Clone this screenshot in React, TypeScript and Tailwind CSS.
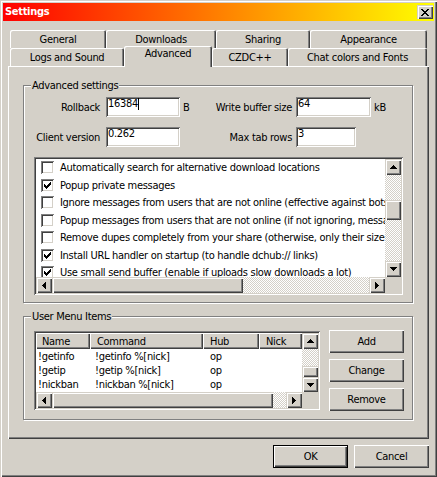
import React from 'react';

// classic 3d edges
const RAISED_BTN =
  'shadow-[inset_1px_1px_0_#ffffff,inset_-1px_-1px_0_#404040,inset_-2px_-2px_0_#808080]';
const RAISED_BAR =
  'shadow-[inset_1px_1px_0_#d4d0c8,inset_2px_2px_0_#ffffff,inset_-1px_-1px_0_#404040,inset_-2px_-2px_0_#808080]';
const SUNKEN =
  'shadow-[inset_1px_1px_0_#808080,inset_-1px_-1px_0_#ffffff,inset_2px_2px_0_#404040,inset_-2px_-2px_0_#d4d0c8]';
const DITHER =
  'bg-[image:repeating-conic-gradient(#ffffff_0_25%,#d4d0c8_0_50%)] bg-[length:2px_2px]';

function Arrow({ dir }: { dir: 'up' | 'down' | 'left' | 'right' }) {
  const sizes = [1, 3, 5, 7];
  if (dir === 'up' || dir === 'down') {
    return (
      <svg width="7" height="4" viewBox="0 0 7 4" shapeRendering="crispEdges">
        {sizes.map((w, i) => (
          <rect key={i} x={(7 - w) / 2} y={dir === 'up' ? i : 3 - i} width={w} height="1" fill="#000" />
        ))}
      </svg>
    );
  }
  return (
    <svg width="4" height="7" viewBox="0 0 4 7" shapeRendering="crispEdges">
      {sizes.map((h, i) => (
        <rect key={i} x={dir === 'left' ? i : 3 - i} y={(7 - h) / 2} width="1" height={h} fill="#000" />
      ))}
    </svg>
  );
}

function ScrollBtn({ dir, className = 'h-[16px]' }: { dir: 'up' | 'down' | 'left' | 'right'; className?: string }) {
  return (
    <div className={`flex w-[16px] shrink-0 items-center justify-center bg-[#d4d0c8] ${RAISED_BAR} ${className}`}>
      <Arrow dir={dir} />
    </div>
  );
}

function Thumb({ className }: { className: string }) {
  return <div className={`shrink-0 bg-[#d4d0c8] ${RAISED_BAR} ${className}`} />;
}

function Check({ on }: { on: boolean }) {
  const cols = [
    [3, 5],
    [4, 6],
    [5, 7],
    [6, 6],
    [7, 5],
    [8, 4],
    [9, 3],
  ];
  return (
    <div className={`relative h-[13px] w-[13px] shrink-0 bg-white ${SUNKEN}`}>
      {on && (
        <svg className="absolute left-0 top-0" width="13" height="13" viewBox="0 0 13 13" shapeRendering="crispEdges">
          {cols.map(([x, y]) => (
            <rect key={x} x={x} y={y} width="1" height="3" fill="#000" />
          ))}
        </svg>
      )}
    </div>
  );
}

function Button({ label, def }: { label: string; def?: boolean }) {
  return (
    <div
      className={`flex h-[23px] w-[75px] items-center justify-center bg-[#d4d0c8] ${
        def ? 'border border-black' : ''
      } ${RAISED_BTN}`}
    >
      {label}
    </div>
  );
}

function Field({ value, caret, className }: { value: string; caret?: boolean; className: string }) {
  return (
    <div className={`flex h-[20px] shrink-0 items-start bg-white pl-[2px] pt-0 ${SUNKEN} ${className}`}>
      <span>{value}</span>
      {caret && <span className="mt-[1px] h-[12px] w-px bg-black" />}
    </div>
  );
}

function Tab({ label, className }: { label: string; className: string }) {
  return (
    <div
      className={`flex shrink-0 items-center justify-center rounded-t-[2px] bg-[#d4d0c8] pt-px shadow-[inset_1px_1px_0_#ffffff,inset_-1px_0_0_#404040,inset_-2px_0_0_#808080] ${className}`}
    >
      {label}
    </div>
  );
}

function GroupBox({ title, className, children }: { title: string; className: string; children: React.ReactNode }) {
  return (
    <div
      className={`relative w-[390px] border border-[#808080] shadow-[1px_1px_0_#ffffff,inset_1px_1px_0_#ffffff] ${className}`}
    >
      <span className="absolute left-[7px] top-[-7px] bg-[#d4d0c8] px-px">{title}</span>
      {children}
    </div>
  );
}

const options: [boolean, string][] = [
  [false, 'Automatically search for alternative download locations'],
  [true, 'Popup private messages'],
  [false, 'Ignore messages from users that are not online (effective against bots)'],
  [false, 'Popup messages from users that are not online (if not ignoring, messages go to main chat if enabled)'],
  [false, 'Remove dupes completely from your share (otherwise, only their size is added)'],
  [true, 'Install URL handler on startup (to handle dchub:// links)'],
  [true, 'Use small send buffer (enable if uploads slow downloads a lot)'],
];

const menuItems = [
  { name: '!getinfo', command: '!getinfo %[nick]', hub: 'op' },
  { name: '!getip', command: '!getip %[nick]', hub: 'op' },
  { name: '!nickban', command: '!nickban %[nick]', hub: 'op' },
];

export default function App() {
  return (
    <div className="flex h-[477px] w-[437px] flex-col overflow-hidden bg-[#d4d0c8] p-[3px] font-['DejaVu_Sans_Condensed','Liberation_Sans',sans-serif] text-[11px] leading-[13px] tracking-[-0.3px] text-black shadow-[inset_1px_1px_0_#d4d0c8,inset_2px_2px_0_#ffffff,inset_-1px_-1px_0_#404040,inset_-2px_-2px_0_#808080]">
      {/* title bar */}
      <div className="flex h-[18px] shrink-0 items-start justify-between bg-[linear-gradient(to_right,#ff0000,#ffff00)]">
        <span className="pl-[2px] pt-[2px] font-bold text-white">Settings</span>
        <div className={`mr-px mt-[2px] flex h-[14px] w-[16px] items-center justify-center bg-[#d4d0c8] ${RAISED_BAR}`}>
          <svg width="8" height="7" viewBox="0 0 8 7" shapeRendering="crispEdges">
            <rect x="0" y="0" width="2" height="1" />
            <rect x="6" y="0" width="2" height="1" />
            <rect x="1" y="1" width="2" height="1" />
            <rect x="5" y="1" width="2" height="1" />
            <rect x="2" y="2" width="4" height="1" />
            <rect x="3" y="3" width="2" height="1" />
            <rect x="2" y="4" width="4" height="1" />
            <rect x="1" y="5" width="2" height="1" />
            <rect x="5" y="5" width="2" height="1" />
            <rect x="0" y="6" width="2" height="1" />
            <rect x="6" y="6" width="2" height="1" />
          </svg>
        </div>
      </div>

      <div className="flex flex-col px-[5px] pt-[9px]">
        {/* tabs */}
        <div className="flex h-[18px] pl-[2px]">
          <Tab label="General" className="h-[18px] w-[96px]" />
          <Tab label="Downloads" className="h-[18px] w-[110px]" />
          <Tab label="Sharing" className="h-[18px] w-[94px]" />
          <Tab label="Appearance" className="h-[18px] w-[117px]" />
        </div>
        <div className="flex h-[18px] items-start pl-[2px]">
          <Tab label="Logs and Sound" className="h-[18px] w-[114px]" />
          <Tab label="Advanced" className="relative z-10 -mt-[2px] h-[21px] w-[88px] items-start pt-[3px]" />
          <Tab label="CZDC++" className="h-[18px] w-[76px]" />
          <Tab label="Chat colors and Fonts" className="h-[18px] w-[139px]" />
        </div>

        {/* tab page */}
        <div className="h-[373px] bg-[#d4d0c8] pl-[15px] pt-[19px] shadow-[inset_1px_1px_0_#ffffff,inset_-1px_-1px_0_#404040,inset_-2px_-2px_0_#808080]">
          <GroupBox title="Advanced settings" className="pb-[7px] pt-[11px]">
            <div className="flex h-[20px] items-center">
              <span className="w-[76px] text-right">Rollback</span>
              <Field value="16384" caret className="ml-[6px] w-[74px]" />
              <span className="w-[16px] pl-[3px]">B</span>
              <span className="w-[96px] text-right">Write buffer size</span>
              <Field value="64" className="ml-[4px] w-[75px]" />
              <span className="pl-[3px]">kB</span>
            </div>
            <div className="mt-[10px] flex h-[20px] items-center">
              <span className="w-[76px] text-right">Client version</span>
              <Field value="0.262" className="ml-[6px] w-[74px]" />
              <span className="w-[16px]" />
              <span className="w-[96px] text-right">Max tab rows</span>
              <Field value="3" className="ml-[4px] w-[60px]" />
            </div>

            <div className={`ml-[10px] mt-[10px] flex h-[138px] w-[369px] flex-col bg-white p-[2px] ${SUNKEN}`}>
              <div className="flex h-[118px]">
                <div className="w-[349px] overflow-hidden">
                  {options.map(([on, text]) => (
                    <div key={text} className="flex h-[17.5px] items-center whitespace-nowrap pl-[5px]">
                      <Check on={on} />
                      <span className="ml-[6px]">{text}</span>
                    </div>
                  ))}
                </div>
                <div className="flex w-[16px] flex-col">
                  <ScrollBtn dir="up" />
                  <div className={`h-[25px] ${DITHER}`} />
                  <Thumb className="h-[20px] w-[16px]" />
                  <div className={`flex-1 ${DITHER}`} />
                  <ScrollBtn dir="down" />
                </div>
              </div>
              <div className="flex h-[16px]">
                <ScrollBtn dir="left" />
                <Thumb className="h-[16px] w-[191px]" />
                <div className={`flex-1 ${DITHER}`} />
                <ScrollBtn dir="right" />
                <div className="w-[16px] bg-[#d4d0c8]" />
              </div>
            </div>
          </GroupBox>

          <GroupBox title="User Menu Items" className="mt-[13px] pb-[8px] pt-[13px]">
            <div className="flex items-start">
              <div className={`ml-[10px] mt-px flex h-[79px] w-[286px] flex-col bg-white p-[2px] ${SUNKEN}`}>
                <div className="flex h-[59px]">
                  <div className="w-[266px] overflow-hidden">
                    <div className="flex h-[16px]">
                      <div className={`flex w-[54px] items-center bg-[#d4d0c8] pl-[6px] ${RAISED_BTN}`}>Name</div>
                      <div className={`flex w-[113px] items-center bg-[#d4d0c8] pl-[7px] ${RAISED_BTN}`}>Command</div>
                      <div className={`flex w-[56px] items-center bg-[#d4d0c8] pl-[7px] ${RAISED_BTN}`}>Hub</div>
                      <div className={`flex flex-1 items-center bg-[#d4d0c8] pl-[7px] ${RAISED_BTN}`}>Nick</div>
                    </div>
                    {menuItems.map((m) => (
                      <div key={m.name} className="flex h-[14px] items-center whitespace-nowrap">
                        <span className="w-[54px] pl-[2px]">{m.name}</span>
                        <span className="w-[113px] pl-[5px]">{m.command}</span>
                        <span className="w-[56px] pl-[7px]">{m.hub}</span>
                      </div>
                    ))}
                  </div>
                  <div className="flex w-[16px] flex-col">
                    <ScrollBtn dir="up" />
                    <div className={`h-[17px] ${DITHER}`} />
                    <Thumb className="h-[11px] w-[16px]" />
                    <ScrollBtn dir="down" className="h-[15px]" />
                  </div>
                </div>
                <div className="flex h-[16px]">
                  <ScrollBtn dir="left" />
                  <Thumb className="h-[16px] w-[221px]" />
                  <div className={`flex-1 ${DITHER}`} />
                  <ScrollBtn dir="right" />
                  <div className="w-[16px] bg-[#d4d0c8]" />
                </div>
              </div>
              <div className="ml-[9px] flex flex-col gap-[6px]">
                <Button label="Add" />
                <Button label="Change" />
                <Button label="Remove" />
              </div>
            </div>
          </GroupBox>
        </div>

        {/* dialog buttons */}
        <div className="mt-[6px] flex justify-end gap-[6px]">
          <Button label="OK" def />
          <Button label="Cancel" />
        </div>
      </div>
    </div>
  );
}
